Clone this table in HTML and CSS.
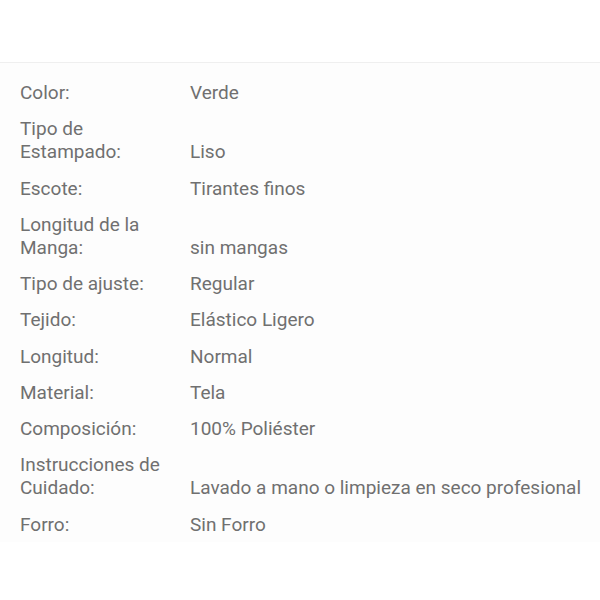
FILE: index.html
```html
<!DOCTYPE html>
<html lang="es">
<head>
  <meta charset="UTF-8">
  <title>Descripción</title>
  <link rel="stylesheet" href="styles.css">
</head>
<body>

  <div class="top-bar"></div>

  <div class="attrs">
    <div class="attr-row"><div class="attr-key">Color:</div><div class="attr-val">Verde</div></div>
    <div class="attr-row"><div class="attr-key">Tipo de Estampado:</div><div class="attr-val">Liso</div></div>
    <div class="attr-row"><div class="attr-key">Escote:</div><div class="attr-val">Tirantes finos</div></div>
    <div class="attr-row"><div class="attr-key">Longitud de la Manga:</div><div class="attr-val">sin mangas</div></div>
    <div class="attr-row"><div class="attr-key">Tipo de ajuste:</div><div class="attr-val">Regular</div></div>
    <div class="attr-row"><div class="attr-key">Tejido:</div><div class="attr-val">Elástico Ligero</div></div>
    <div class="attr-row"><div class="attr-key">Longitud:</div><div class="attr-val">Normal</div></div>
    <div class="attr-row"><div class="attr-key">Material:</div><div class="attr-val">Tela</div></div>
    <div class="attr-row"><div class="attr-key">Composición:</div><div class="attr-val">100% Poliéster</div></div>
    <div class="attr-row"><div class="attr-key">Instrucciones de Cuidado:</div><div class="attr-val">Lavado a mano o limpieza en seco profesional</div></div>
    <div class="attr-row"><div class="attr-key">Forro:</div><div class="attr-val">Sin Forro</div></div>
  </div>

</body>
</html>
```

FILE: styles.css
```css
body {
  font-family: Roboto, 'Noto Sans', sans-serif;
  margin: 0;
  padding: 0;
  background: #fff;
  color: #707070;
}

.top-bar {
  height: 62px;
  border-bottom: 1px solid #efefef;
}

.attrs {
  display: flex;
  flex-direction: column;
  gap: 13px;
  padding: 18px 0 6px 20px;
  background: #fdfdfd;
}

.attr-row {
  display: flex;
  align-items: flex-end;
  gap: 20px;
  font-size: 19px;
  line-height: 23.2px;
}

.attr-key {
  width: 150px;
  flex-shrink: 0;
}

.attr-val {
  flex: 1;
}
```
